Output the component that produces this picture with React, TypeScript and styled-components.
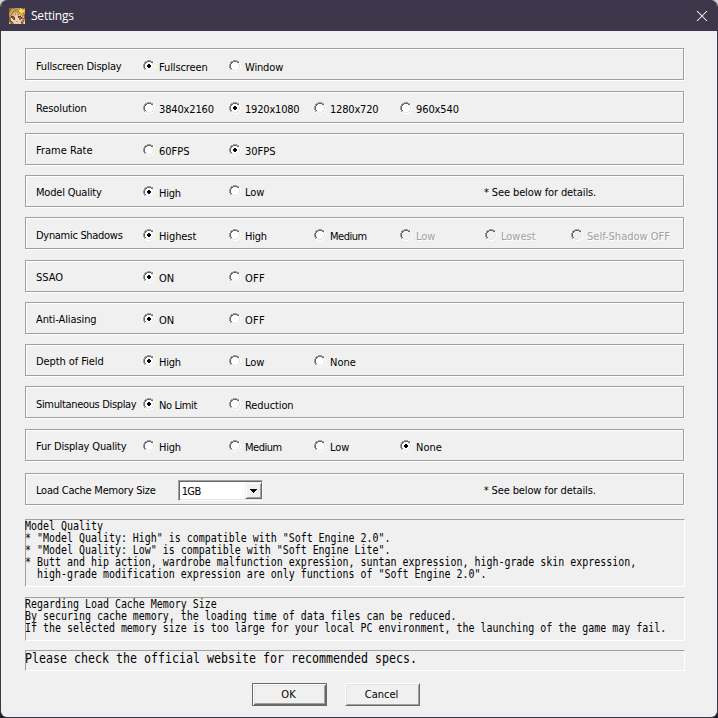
import React from "react";
import styled, { createGlobalStyle } from "styled-components";

const GlobalStyle = createGlobalStyle`
  body {
    margin: 0;
    width: 718px;
    height: 718px;
    overflow: hidden;
    background: linear-gradient(#d2d2d4 50%, #1b1922 50%);
  }
`;

const Window = styled.div`
  box-sizing: border-box;
  width: 718px;
  height: 718px;
  border: 1px solid #3d374b;
  border-top: 0;
  border-radius: 7px;
  overflow: hidden;
  background: #f0f0f0;
  color: #000;
  font: 11px/12px "DejaVu Sans Condensed", "DejaVu Sans", sans-serif;
  display: flex;
  flex-direction: column;
  white-space: pre;
`;

const TitleBar = styled.header`
  height: 31px;
  flex: none;
  box-sizing: border-box;
  padding: 0 9px 0 8px;
  background: #3d374b;
  color: #fff;
  display: flex;
  align-items: center;
`;

const Title = styled.span`
  flex: 1;
  margin-left: 6px;
  padding-top: 1px;
  font: 12px/16px "Open Sans", "Noto Sans", sans-serif;
  letter-spacing: -0.22px;
`;

const Content = styled.main`
  padding: 17px 0 0 24px;
  display: flex;
  flex-direction: column;
`;

const Group = styled.section<{ $gap: number; $inset: number }>`
  box-sizing: border-box;
  width: 659px;
  height: 32px;
  margin-bottom: ${(p) => p.$gap + 1}px;
  padding: ${(p) => p.$inset - 1}px 0 0 10px;
  border: 1px solid #a0a0a0;
  box-shadow: inset 1px 1px #fff, 1px 1px #fff;
  display: flex;
  align-items: flex-start;
`;

const Text = styled.span<{ $spacing?: number }>`
  letter-spacing: ${(p) => p.$spacing ?? 0}px;
`;

const GroupLabel = styled(Text)`
  width: 107px;
  flex: none;
  padding-top: 1px;
`;

const Options = styled.div`
  display: grid;
  grid-template-columns: 86px 85px 86px 85px 86px 100px;
`;

const Option = styled.label<{ $disabled?: boolean; $raised?: boolean }>`
  display: flex;
  gap: 4px;
  margin-top: ${(p) => (p.$raised ? -1 : 0)}px;
  color: ${(p) => (p.$disabled ? "#a0a0a0" : "#000")};
  text-shadow: ${(p) => (p.$disabled ? "1px 1px #fff" : "none")};
`;

const OptionText = styled(Text)`
  padding-top: 2px;
`;

const NoteCell = styled.div`
  grid-column: 5 / 7;
  margin: 1px 0 0 -1px;
`;

const ComboCell = styled.div`
  width: 328px;
  flex: none;
`;

const ComboBox = styled.div`
  box-sizing: border-box;
  width: 85px;
  height: 21px;
  margin: -5px 0 0 22px;
  border: 1px solid;
  border-color: #a0a0a0 #fff #fff #a0a0a0;
  box-shadow: inset 1px 1px #696969, inset -1px -1px #e3e3e3;
  background: #fff;
  display: flex;
  justify-content: space-between;
  padding: 1px 0 1px 1px;
`;

const ComboValue = styled(Text)`
  padding: 4px 0 0 2px;
`;

const ComboArrow = styled.span`
  box-sizing: border-box;
  width: 17px;
  height: 17px;
  border: 1px solid;
  border-color: #f0f0f0 #696969 #696969 #f0f0f0;
  box-shadow: inset 1px 1px #fff, inset -1px -1px #a0a0a0;
  background: #f0f0f0;
  display: flex;
  justify-content: center;
  padding-top: 6px;
`;

const Sunken = styled.section<{ $height: number; $gap: number }>`
  box-sizing: border-box;
  width: 660px;
  height: ${(p) => p.$height}px;
  margin-bottom: ${(p) => p.$gap}px;
  border: 1px solid;
  border-color: #a0a0a0 #fff #fff #a0a0a0;
`;

const Mono = styled.div<{ $size: number }>`
  display: flex;
  flex-direction: column;
  margin-left: -1px;
  font: ${(p) => p.$size}px / 14px "DejaVu Sans Mono", monospace;
  transform: scaleY(1.2);
  transform-origin: 0 0;

  &::after {
    content: ".";
    height: 14px;
    margin-top: -8px;
    color: #f0f0f001;
  }
`;

const MonoLine = styled.span<{ $pitch: number }>`
  height: 14px;
  margin: ${(p) => (p.$pitch - 14) / 2}px 0;
`;

const Buttons = styled.footer`
  display: flex;
  gap: 18px;
  margin: 0 0 0 227px;
`;

const Button = styled.button<{ $default?: boolean }>`
  box-sizing: border-box;
  width: 75px;
  height: 23px;
  padding: 0 2px 0 0;
  background: #f0f0f0;
  color: #000;
  font: inherit;
  border: 1px solid;
  border-color: ${(p) => (p.$default ? "#696969" : "#fff #696969 #696969 #fff")};
  box-shadow: ${(p) =>
    p.$default
      ? "inset 1px 1px #fff, inset -1px -1px #696969, inset 2px 2px #e3e3e3, inset -2px -2px #a0a0a0"
      : "inset 1px 1px #e3e3e3, inset -1px -1px #a0a0a0"};
`;

const Pixels = styled.svg`
  display: block;
  flex: none;
`;

type PixelArtProps = { rows: string[]; palette: Record<string, string> };

function PixelArt({ rows, palette }: PixelArtProps) {
  return (
    <Pixels width={rows[0].length} height={rows.length} shapeRendering="crispEdges">
      {rows.flatMap((row, y) =>
        [...row].map((key, x) =>
          palette[key] ? <rect key={`${x}-${y}`} x={x} y={y} width="1" height="1" fill={palette[key]} /> : null
        )
      )}
    </Pixels>
  );
}

const radioRows = [
  "    gggg    ",
  "  ggddddgg  ",
  " gddwwwwddh ",
  " gdwwwwwwlh ",
  "gdwwwwwwwwlh",
  "gdwwwwwwwwlh",
  "gdwwwwwwwwlh",
  "gdwwwwwwwwlh",
  " gdwwwwwwlh ",
  " gllwwwwllh ",
  "  hhllllhh  ",
  "    hhhh    ",
];

function Radio({ checked, disabled }: { checked?: boolean; disabled?: boolean }) {
  const rows = radioRows.map((row, y) => {
    if (!checked || y < 4 || y > 7) return row;
    const dot = y === 4 || y === 7 ? "wkkw" : "kkkk";
    return row.slice(0, 4) + dot + row.slice(8);
  });
  return (
    <PixelArt
      rows={rows}
      palette={{ g: "#a0a0a0", d: "#696969", l: "#e3e3e3", h: "#ffffff", k: "#000000", w: disabled ? "#f0f0f0" : "#ffffff" }}
    />
  );
}

const avatarRows = [
  "bbbcbcccdccdcbbc",
  "bbccdccccdcyydcc",
  "bccdccccccyyydyy",
  "bcdccccdccyyyyyd",
  "ccdccddccdcdyycc",
  "cdccddcsdccddccd",
  "cdccdscddcsdcdcb",
  "cccdscssddscdccb",
  "ccaaassssaaascdb",
  "bcaeeasssaeeacdb",
  "bcweeasssweeacbb",
  "bbwweasssweewccc",
  "bbpssssssssspcbd",
  "bbbpsssrrsspccbd",
  "dbbbpsssssspbbdw",
  "ddbbcwpsspwwbbdw",
];

const avatarPalette = {
  a: "#5a3a33", b: "#8d6238", c: "#b78a4e", d: "#d9b272", y: "#ffe325",
  s: "#f0ccb0", e: "#946a4a", w: "#efe4dc", p: "#e0a898", r: "#d08a80",
};

const arrowRows = ["kkkkkkk", " kkkkk ", "  kkk  ", "   k   "];

type Choice = { text: string; spacing?: number; disabled?: boolean; raised?: boolean };
type Setting = {
  label: string;
  spacing: number;
  gap: number;
  inset: number;
  selected: number;
  choices: Choice[];
  note?: boolean;
};

const high = { text: "High", spacing: -0.25 };
const medium = { text: "Medium", spacing: -0.5 };

const settings: Setting[] = [
  { label: "Fullscreen Display", spacing: -0.22, gap: 10, inset: 12, selected: 0,
    choices: [{ text: "Fullscreen", spacing: -0.1 }, { text: "Window", spacing: -0.15 }] },
  { label: "Resolution", spacing: -0.1, gap: 9, inset: 11, selected: 1,
    choices: [
      { text: "3840x2160", spacing: -0.15 },
      { text: "1920x1080", spacing: -0.2 },
      { text: "1280x720", spacing: -0.2 },
      { text: "960x540", spacing: -0.1 },
    ] },
  { label: "Frame Rate", spacing: 0, gap: 9, inset: 11, selected: 1, choices: [{ text: "60FPS" }, { text: "30FPS" }] },
  { label: "Model Quality", spacing: -0.2, gap: 9, inset: 11, selected: 0, note: true,
    choices: [high, { text: "Low", raised: true }] },
  { label: "Dynamic Shadows", spacing: -0.3, gap: 10, inset: 12, selected: 0,
    choices: [
      { text: "Highest", spacing: -0.1 },
      high,
      medium,
      { text: "Low", disabled: true },
      { text: "Lowest", disabled: true },
      { text: "Self-Shadow OFF", disabled: true },
    ] },
  { label: "SSAO", spacing: 0, gap: 9, inset: 11, selected: 0, choices: [{ text: "ON" }, { text: "OFF", spacing: 0.2 }] },
  { label: "Anti-Aliasing", spacing: -0.1, gap: 9, inset: 11, selected: 0, choices: [{ text: "ON" }, { text: "OFF", spacing: 0.2 }] },
  { label: "Depth of Field", spacing: -0.08, gap: 9, inset: 11, selected: 0, choices: [high, { text: "Low" }, { text: "None" }] },
  { label: "Simultaneous Display", spacing: -0.34, gap: 10, inset: 12, selected: 0,
    choices: [{ text: "No Limit", spacing: -0.4 }, { text: "Reduction", spacing: -0.1 }] },
  { label: "Fur Display Quality", spacing: -0.16, gap: 11, inset: 11, selected: 3,
    choices: [high, medium, { text: "Low" }, { text: "None" }] },
];

const noteText = "* See below for details.";

const qualityLines = [
  "Model Quality",
  '* "Model Quality: High" is compatible with "Soft Engine 2.0".',
  '* "Model Quality: Low" is compatible with "Soft Engine Lite".',
  "* Butt and hip action, wardrobe malfunction expression, suntan expression, high-grade skin expression,",
  '  high-grade modification expression are only functions of "Soft Engine 2.0".',
];

const cacheLines = [
  "Regarding Load Cache Memory Size",
  "By securing cache memory, the loading time of data files can be reduced.",
  "If the selected memory size is too large for your local PC environment, the launching of the game may fail.",
];

function SettingRow({ setting }: { setting: Setting }) {
  return (
    <Group $gap={setting.gap} $inset={setting.inset}>
      <GroupLabel $spacing={setting.spacing}>{setting.label}</GroupLabel>
      <Options>
        {setting.choices.map((choice, i) => (
          <Option key={choice.text} $disabled={choice.disabled} $raised={choice.raised}>
            <Radio checked={i === setting.selected} disabled={choice.disabled} />
            <OptionText $spacing={choice.spacing}>{choice.text}</OptionText>
          </Option>
        ))}
        {setting.note && (
          <NoteCell>
            <Text $spacing={-0.12}>{noteText}</Text>
          </NoteCell>
        )}
      </Options>
    </Group>
  );
}

function MonoText({ lines, size, pitch }: { lines: string[]; size: number; pitch: number }) {
  return (
    <Mono $size={size}>
      {lines.map((text) => (
        <MonoLine key={text} $pitch={pitch}>{text}</MonoLine>
      ))}
    </Mono>
  );
}

export default function App() {
  return (
    <>
      <GlobalStyle />
      <Window>
        <TitleBar>
          <PixelArt rows={avatarRows} palette={avatarPalette} />
          <Title>Settings</Title>
          <svg width="12" height="12" viewBox="0 0 12 12" fill="none" stroke="#fff" strokeWidth="1.05">
            <path d="M1 1 L11 11 M11 1 L1 11" />
          </svg>
        </TitleBar>
        <Content>
          {settings.map((setting) => (
            <SettingRow key={setting.label} setting={setting} />
          ))}
          <Group $gap={13} $inset={12}>
            <Text $spacing={-0.22}>Load Cache Memory Size</Text>
            <ComboCell>
              <ComboBox>
                <ComboValue $spacing={-0.6}>1GB</ComboValue>
                <ComboArrow>
                  <PixelArt rows={arrowRows} palette={{ k: "#000" }} />
                </ComboArrow>
              </ComboBox>
            </ComboCell>
            <Text $spacing={-0.12}>{noteText}</Text>
          </Group>
          <Sunken $height={68} $gap={10}>
            <MonoText lines={qualityLines} size={9.967} pitch={10} />
          </Sunken>
          <Sunken $height={44} $gap={9}>
            <MonoText lines={cacheLines} size={9.967} pitch={10} />
          </Sunken>
          <Sunken $height={21} $gap={12}>
            <MonoText lines={["Please check the official website for recommended specs."]} size={11.63} pitch={12} />
          </Sunken>
          <Buttons>
            <Button $default><Text $spacing={0.2}>OK</Text></Button>
            <Button>Cancel</Button>
          </Buttons>
        </Content>
      </Window>
    </>
  );
}
